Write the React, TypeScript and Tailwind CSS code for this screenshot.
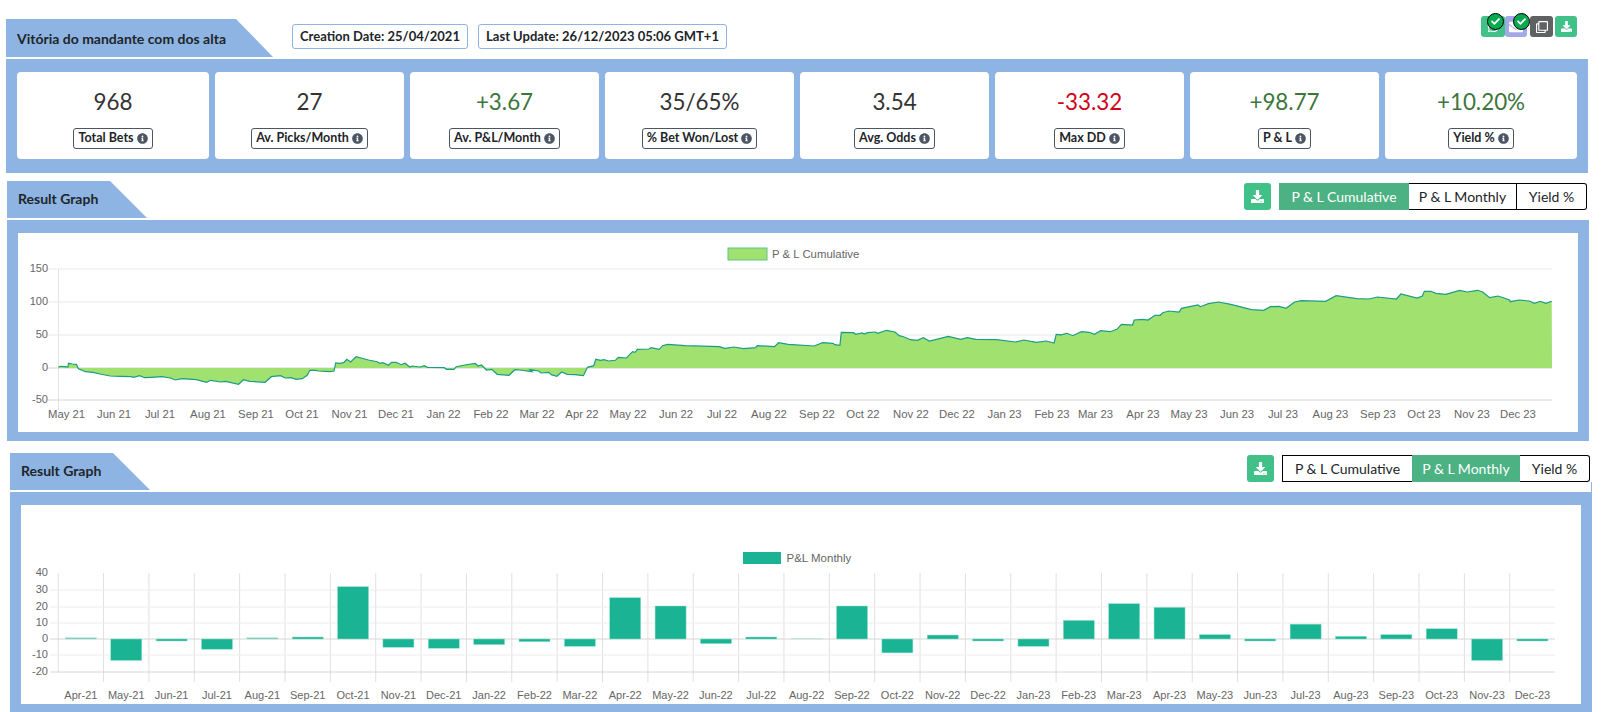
import React from "react";
import { FaCheck, FaDownload, FaEnvelope, FaInfoCircle, FaRegClone, FaWhatsapp } from "react-icons/fa";

// chart traces, taken as [x, y] in page pixels
const toPage = (x0: number, sx: number, y0: number, pts: number[]) => {
  const out: string[] = [];
  for (let i = 0; i < pts.length; i += 2) {
    out.push(`${(x0 + pts[i] / sx).toFixed(1)},${(y0 + pts[i + 1] / 3).toFixed(1)}`);
  }
  return out;
};

const line = [
  ...toPage(0, 2.904, 225, [170,427,175,424,190,425,197,426,199,415,210,417,222,418,228,431,248,440,270,442,290,447,320,453,350,454,380,455,388,457,405,452,420,458,440,457,470,455,495,459,508,465,530,461,570,464,600,472,612,466,640,471,655,469,693,478,707,464,725,469,770,472,788,455,815,452,828,459,845,458,860,463,878,461,892,451,900,436,915,436,925,438,958,440,970,438,975,414,985,415,998,413,1007,403,1018,411,1034,395,1070,405,1095,410,1103,415,1112,413,1128,421,1137,412,1150,412,1165,419,1176,415,1190,426,1197,423,1220,426,1232,422,1242,427,1290,428,1297,433,1318,433,1325,425,1350,420,1380,415,1388,423,1398,420,1413,435,1428,433,1444,448,1478,451,1495,434,1510,435,1545,440]),
  ...toPage(530, 2.904, 225, [0,434,25,438,32,444,55,442,62,449,78,454,92,441,108,448,130,449,155,452,167,427,185,422,191,403,205,406,215,404,228,408,248,406,256,397,280,399,298,380,305,382,312,373,345,372,352,368,375,373,385,362,400,358,450,362,550,365,565,370,592,366,620,371,655,368,660,362,710,365,722,353,750,358,825,363,850,353,880,355,885,359,900,361,904,322,940,323,945,328,965,324,970,327,980,323,1003,321,1010,325,1035,316,1060,321,1072,332,1085,335,1105,344,1125,346,1142,338,1160,348,1215,334,1250,343,1270,338,1295,343,1355,344,1410,351,1435,345,1470,352,1500,348,1522,354,1528,328,1538,329]),
  ...toPage(1060, 2.898, 225, [0,330,20,325,37,332,62,320,85,322,100,328,118,317,145,320,165,313,178,298,210,300,215,285,240,283,255,285,275,271,290,271,298,263,315,258,345,261,352,250,400,240,407,245,430,236,460,231,495,238,555,254,590,256,610,245,635,244,655,250,680,231,700,227,770,229,800,212,860,221,895,222,920,216,975,222,988,207,1035,219,1050,213,1056,199,1075,199,1090,205,1118,208,1158,196,1180,201,1210,196,1225,201,1245,218,1270,213,1303,225,1305,230,1330,225,1360,228,1375,235,1392,229,1408,235,1425,229]),
];

const cumulativeTicks: [string, number][] = [
  ["May 21", 66.5], ["Jun 21", 114], ["Jul 21", 160], ["Aug 21", 208], ["Sep 21", 256], ["Oct 21", 302],
  ["Nov 21", 349.5], ["Dec 21", 396], ["Jan 22", 443.5], ["Feb 22", 491], ["Mar 22", 537], ["Apr 22", 582],
  ["May 22", 628], ["Jun 22", 676], ["Jul 22", 722], ["Aug 22", 769], ["Sep 22", 817], ["Oct 22", 863],
  ["Nov 22", 911], ["Dec 22", 957], ["Jan 23", 1004.5], ["Feb 23", 1052], ["Mar 23", 1095.5], ["Apr 23", 1143],
  ["May 23", 1189], ["Jun 23", 1237], ["Jul 23", 1283], ["Aug 23", 1330.5], ["Sep 23", 1378], ["Oct 23", 1424],
  ["Nov 23", 1472], ["Dec 23", 1518],
];

const monthly: [string, number][] = [
  ["Apr-21", 0.8], ["May-21", -13], ["Jun-21", -1.2], ["Jul-21", -6.2], ["Aug-21", 0.8], ["Sep-21", 1.2],
  ["Oct-21", 31.7], ["Nov-21", -5], ["Dec-21", -5.6], ["Jan-22", -3.4], ["Feb-22", -1.6], ["Mar-22", -4.4],
  ["Apr-22", 25], ["May-22", 20], ["Jun-22", -2.8], ["Jul-22", 1.2], ["Aug-22", 0.1], ["Sep-22", 20],
  ["Oct-22", -8.4], ["Nov-22", 2.4], ["Dec-22", -1.2], ["Jan-23", -4.4], ["Feb-23", 11.3], ["Mar-23", 21.4],
  ["Apr-23", 19.2], ["May-23", 2.6], ["Jun-23", -1.2], ["Jul-23", 9], ["Aug-23", 1.6], ["Sep-23", 2.6],
  ["Oct-23", 6.2], ["Nov-23", -13], ["Dec-23", -1.2],
];

const stats = [
  { value: "968", label: "Total Bets", color: "text-[#333333]" },
  { value: "27", label: "Av. Picks/Month", color: "text-[#333333]" },
  { value: "+3.67", label: "Av. P&L/Month", color: "text-[#3c763d]" },
  { value: "35/65%", label: "% Bet Won/Lost", color: "text-[#333333]" },
  { value: "3.54", label: "Avg. Odds", color: "text-[#333333]" },
  { value: "-33.32", label: "Max DD", color: "text-[#d0021b]" },
  { value: "+98.77", label: "P & L", color: "text-[#3c763d]" },
  { value: "+10.20%", label: "Yield %", color: "text-[#3c763d]" },
];

function Tabs({ active }: { active: number }) {
  const names = ["P & L Cumulative", "P & L Monthly", "Yield %"];
  const widths = ["w-[130px]", "w-[108px]", "w-[70px]"];
  return (
    <div className="flex h-[27px] text-[14px] text-[#212529]">
      {names.map((n, i) => (
        <div
          key={n}
          className={`flex items-center justify-center ${widths[i]} ${
            i === active ? "bg-[#4cb283] text-white" : "border-y border-black"
          } ${i === 0 && i !== active ? "border-l" : ""} ${i === 2 ? "rounded-r-[3px] border-r" : ""} ${
            i === 1 && active === 0 ? "border-r" : ""
          }`}
        >
          {n}
        </div>
      ))}
    </div>
  );
}

function DownloadButton() {
  return (
    <button className="flex h-[27px] w-[27px] items-center justify-center rounded-[3px] bg-[#41c088] text-white">
      <FaDownload size={13} />
    </button>
  );
}

function CumulativeChart() {
  const pts = line.join(" ");
  const grid: [string, number][] = [["150", 269], ["100", 302], ["50", 335], ["0", 368], ["-50", 400]];
  return (
    <svg viewBox="18 233 1560 199" className="block h-[199px] w-[1560px]" fontFamily="'Liberation Sans', Arial, sans-serif">
      <rect x="728" y="248" width="39" height="12" fill="#a1e170" stroke="#5fc28a" />
      <text x="772" y="257.5" fontSize="11.4" fill="#666">P &amp; L Cumulative</text>
      <line x1="58.5" x2="58.5" y1="269" y2="410" stroke="#e4e4e4" />
      {grid.map(([label, y]) => (
        <g key={label}>
          <line x1="48" x2="1552" y1={y} y2={y} stroke={label === "0" || label === "-50" ? "#d6d6d6" : "#e8e8e8"} />
          <text x="48" y={y + 3} textAnchor="end" fontSize="11" fill="#666">{label}</text>
        </g>
      ))}
      <polygon points={`58.5,368 ${pts} 1552,368`} fill="#a1e170" />
      <polyline points={pts} fill="none" stroke="#1a9c86" strokeWidth="1.2" />
      {cumulativeTicks.map(([label, x]) => (
        <text key={label} x={x} y="417.5" textAnchor="middle" fontSize="11.3" fill="#666">{label}</text>
      ))}
    </svg>
  );
}

function MonthlyChart() {
  const left = 58.2;
  const step = 45.36;
  const zero = 639;
  const grid: [string, number][] = [["40", 573], ["30", 590], ["20", 607], ["10", 623], ["0", 639], ["-10", 655], ["-20", 672]];
  return (
    <svg viewBox="21 505 1560 199" className="block h-[199px] w-[1560px]" fontFamily="'Liberation Sans', Arial, sans-serif">
      <rect x="743" y="552" width="38" height="12" fill="#1ab394" />
      <text x="786.5" y="561.5" fontSize="11.5" fill="#666">P&amp;L Monthly</text>
      {monthly.map(([label], i) => (
        <line key={label} x1={left + i * step} x2={left + i * step} y1="573" y2={i === 0 ? 672 : 682} stroke="#e0e0e0" />
      ))}
      {grid.map(([label, y]) => (
        <g key={label}>
          {label !== "40" && <line x1="50" x2="1555" y1={y} y2={y} stroke={label === "0" || label === "-20" ? "#d6d6d6" : "#ececec"} />}
          <text x="48" y={y + 3} textAnchor="end" fontSize="11" fill="#666">{label}</text>
        </g>
      ))}
      {monthly.map(([label, v], i) => {
        const h = Math.abs(v) * 1.65;
        return (
          <rect
            key={label}
            x={left + i * step + 7.2}
            y={v > 0 ? zero - h : zero}
            width="31"
            height={h}
            fill="#1ab394"
            stroke="#8fe0cf"
            strokeWidth="0.5"
            opacity={Math.abs(v) < 1 ? 0.6 : 1}
          />
        );
      })}
      {monthly.map(([label], i) => (
        <text key={label} x={left + (i + 0.5) * step} y="698.5" textAnchor="middle" fontSize="11" fill="#666">{label}</text>
      ))}
    </svg>
  );
}

export default function App() {
  return (
    <div className="h-[712px] w-[1601px] overflow-hidden bg-white pt-[16px] font-[Lato,sans-serif] text-[#212529]">
      {/* TITLE ROW */}
      <div className="flex h-[41px] items-start pl-[6px]">
        <div className="mt-[3px] flex h-[38px] w-[267px] items-center bg-[#8db4e2] pl-[11px] text-[14px] font-bold [clip-path:polygon(0_0,230px_0,100%_100%,0_100%)]">
          Vitória do mandante com dos alta
        </div>
        <div className="mt-[8px] ml-[19px] flex h-[25px] w-[176px] items-center justify-center rounded-[3px] border border-[#8db4e2] text-[13px] font-bold">
          Creation Date: 25/04/2021
        </div>
        <div className="mt-[8px] ml-[10px] flex h-[25px] w-[249px] items-center justify-center rounded-[3px] border border-[#8db4e2] text-[13px] font-bold">
          Last Update: 26/12/2023 05:06 GMT+1
        </div>
        <div className="ml-auto mr-[24px] flex text-white">
          <div className="relative flex h-[21px] w-[24px] items-center justify-center rounded-[3px] bg-[#41c088]">
            <FaWhatsapp size={13} />
            <span className="absolute -top-[3px] left-[6px] flex h-[17px] w-[17px] items-center justify-center rounded-full border border-black bg-[#0aa84f] text-white">
              <FaCheck size={9} />
            </span>
          </div>
          <div className="relative flex h-[21px] w-[22px] items-center justify-center rounded-[3px] bg-[#a3a8e6]">
            <FaEnvelope size={14} />
            <span className="absolute -top-[3px] left-[8px] flex h-[17px] w-[17px] items-center justify-center rounded-full border border-black bg-[#0aa84f] text-white">
              <FaCheck size={9} />
            </span>
          </div>
          <div className="ml-[3px] flex h-[21px] w-[23px] items-center justify-center rounded-[3px] bg-[#5f6163]">
            <FaRegClone size={12} />
          </div>
          <div className="ml-[2px] flex h-[21px] w-[22px] items-center justify-center rounded-[3px] bg-[#41c088]">
            <FaDownload size={11} />
          </div>
        </div>
      </div>

      {/* STATS */}
      <div className="mt-[2px] ml-[6px] w-[1582px] bg-[#8db4e2] pt-[13px] pb-[14px] pl-[11px]">
        <div className="grid grid-cols-[192px_repeat(6,189px)_192px] gap-[6px]">
          {stats.map((s) => (
            <div key={s.label} className="flex h-[87px] flex-col items-center rounded-[4px] bg-white pt-[15px]">
              <div className={`h-[26px] text-[22.4px] leading-[30px] ${s.color}`}>{s.value}</div>
              <div className="mt-[15px] flex h-[21px] items-center gap-[3px] rounded-[3px] border border-[#4b5563] px-[4px] text-[12.5px] font-bold">
                {s.label}
                <FaInfoCircle size={11} className="text-[#4b5563]" />
              </div>
            </div>
          ))}
        </div>
      </div>

      {/* CUMULATIVE */}
      <div className="mt-[8px] flex h-[39px] items-start pl-[7px]">
        <div className="flex h-[37px] w-[140px] items-center bg-[#8db4e2] pb-[2px] pl-[11px] text-[14px] font-bold [clip-path:polygon(0_0,103px_0,100%_100%,0_100%)]">
          Result Graph
        </div>
        <div className="ml-auto mr-[14px] mt-[2px] flex gap-[8px]">
          <DownloadButton />
          <Tabs active={0} />
        </div>
      </div>
      <div className="ml-[7px] w-[1582px] bg-[#8db4e2] pt-[13px] pb-[9px] pl-[11px]">
        <div className="w-[1560px] bg-white">
          <CumulativeChart />
        </div>
      </div>

      {/* MONTHLY */}
      <div className="mt-[12px] flex h-[39px] items-start pl-[10px]">
        <div className="flex h-[37px] w-[140px] items-center bg-[#8db4e2] pb-[3px] pl-[11px] text-[14px] font-bold [clip-path:polygon(0_0,103px_0,100%_100%,0_100%)]">
          Result Graph
        </div>
        <div className="ml-auto mt-[2px] flex gap-[8px]">
          <DownloadButton />
          <Tabs active={1} />
        </div>
        <div className="ml-px mr-[9px] h-[10px] w-px self-end bg-[#8db4e2]" />
      </div>
      <div className="ml-[10px] w-[1582px] bg-[#8db4e2] pt-[13px] pb-[9px] pl-[11px]">
        <div className="w-[1560px] bg-white">
          <MonthlyChart />
        </div>
      </div>
    </div>
  );
}
